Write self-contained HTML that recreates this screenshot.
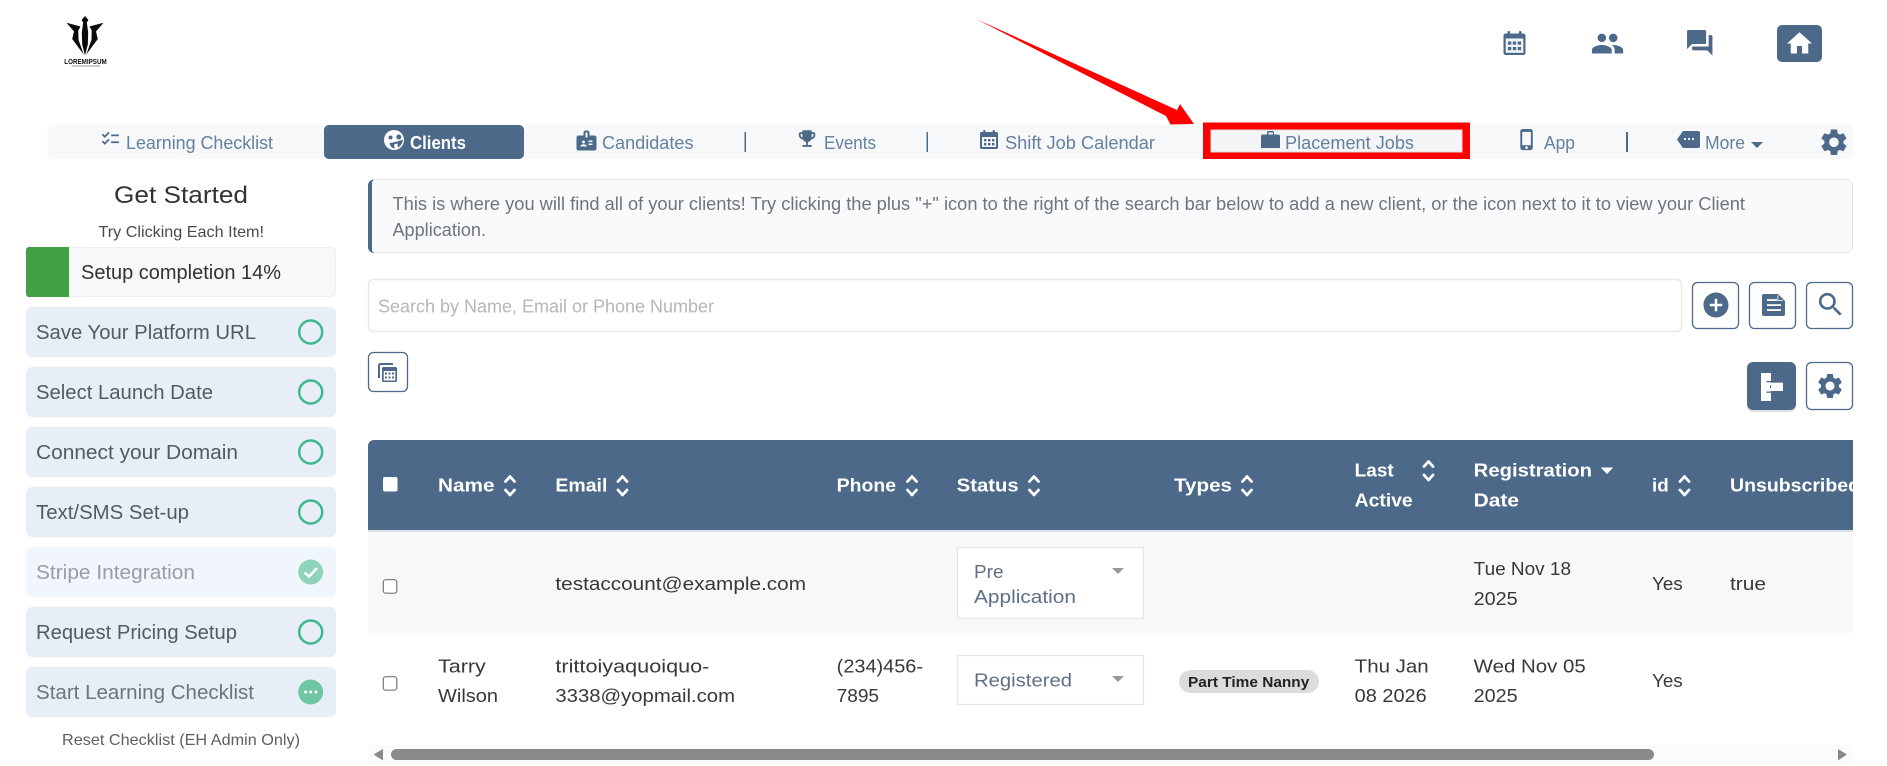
<!DOCTYPE html>
<html lang="en"><head><meta charset="utf-8"><title>Clients</title>
<style>
html,body{margin:0;padding:0;background:#fff;width:1887px;height:766px;overflow:hidden}
svg{display:block}
text{font-family:"Liberation Sans",sans-serif;font-size:18px;white-space:pre}
.nav{fill:#66809e;font-size:18px}
.side{fill:#555a60;font-size:20px}
.hd{fill:#fff;font-weight:700;font-size:18.5px}
.td{fill:#383838;font-size:18.5px}
.sel{fill:#5f7085;font-size:18.5px}
.ic{fill:#4c698a}
</style></head><body>
<svg width="1887" height="766" viewBox="0 0 1887 766" xmlns="http://www.w3.org/2000/svg">
<defs>
<path id="gear" d="M19.14 12.94c.04-.3.06-.61.06-.94 0-.32-.02-.64-.07-.94l2.03-1.58c.18-.14.23-.41.12-.61l-1.92-3.32c-.12-.22-.37-.29-.59-.22l-2.39.96c-.5-.38-1.03-.7-1.62-.94l-.36-2.54c-.04-.24-.24-.41-.48-.41h-3.84c-.24 0-.43.17-.47.41l-.36 2.54c-.59.24-1.13.57-1.62.94l-2.39-.96c-.22-.08-.47 0-.59.22L2.74 8.87c-.12.21-.08.47.12.61l2.03 1.58c-.05.3-.09.63-.09.94s.02.64.07.94l-2.03 1.58c-.18.14-.23.41-.12.61l1.92 3.32c.12.22.37.29.59.22l2.39-.96c.5.38 1.03.7 1.62.94l.36 2.54c.05.24.24.41.48.41h3.84c.24 0 .44-.17.47-.41l.36-2.54c.59-.24 1.13-.56 1.62-.94l2.39.96c.22.08.47 0 .59-.22l1.92-3.32c.12-.22.07-.47-.12-.61l-2.01-1.58zM12 15.6c-1.98 0-3.6-1.62-3.6-3.6s1.62-3.6 3.6-3.6 3.6 1.62 3.6 3.6-1.62 3.6-3.6 3.6z"/>
<g id="sort" fill="none" stroke="#fff" stroke-width="2.8" stroke-linecap="round" stroke-linejoin="round"><path d="M1.5 7.5 6 2.5l4.5 5M1.5 16 6 21l4.5-5"/></g>
<g id="cal"><rect x="0" y="2.5" width="22" height="21.5" rx="2.2"/><rect x="4" y="0" width="2.6" height="5" rx="1"/><rect x="15.4" y="0" width="2.6" height="5" rx="1"/></g>
<clipPath id="tbl"><path d="M368 446a6 6 0 0 1 6-6H1853V766H368z"/></clipPath>
</defs>

<!-- logo -->
<g fill="#0a0a0a">
<path d="M85 16l3.4 4-1.6 2.5 1.4 10-.4 12L85 55.500l-2.800-11-.4-12 1.400-10L81.600 20z"/>
<path d="M66.500 22.700 80.500 26.500l-2.200 3.700.2 9.500 5.200 14.800-11.500-15.500 1.800-7.500z"/>
<path d="M103.500 22.700 89.500 26.500l2.200 3.700-.2 9.500-5.200 14.800 11.500-15.500-1.800-7.500z"/>
</g>
<text x="64.300" y="64" textLength="42.400" lengthAdjust="spacingAndGlyphs" style="font-size:7px;font-weight:700;fill:#111">LOREMIPSUM</text>
<rect x="71.500" y="65.500" width="28.500" height="1" fill="#999"/>

<!-- top icons -->
<g transform="translate(1503.500,31)" class="ic"><use href="#cal"/></g>
<rect x="1505.700" y="38.500" width="17.600" height="14.300" fill="#f2f5f8"/>
<g class="ic" transform="translate(1503.500,31)"><rect x="4.400" y="10.500" width="3.400" height="3.200"/><rect x="9.300" y="10.500" width="3.400" height="3.200"/><rect x="14.200" y="10.500" width="3.400" height="3.200"/><rect x="4.400" y="16" width="3.400" height="3.200"/><rect x="9.300" y="16" width="3.400" height="3.200"/><rect x="14.200" y="16" width="3.400" height="3.200"/></g>
<g class="ic" transform="translate(1590.500,26.500) scale(1.42)"><path d="M16 11c1.660 0 2.990-1.340 2.990-3S17.660 5 16 5c-1.660 0-3 1.340-3 3s1.340 3 3 3zm-8 0c1.660 0 2.990-1.340 2.990-3S9.660 5 8 5C6.340 5 5 6.340 5 8s1.340 3 3 3zm0 2c-2.330 0-7 1.170-7 3.500V19h14v-2.500c0-2.330-4.670-3.500-7-3.500zm8 0c-.29 0-.62.020-.97.050 1.160.84 1.970 1.970 1.970 3.450V19h6v-2.500c0-2.330-4.670-3.500-7-3.500z"/></g>
<g class="ic" transform="translate(1684.500,27.500) scale(1.27)"><path d="M21 6h-2v9H6v2c0 .55.45 1 1 1h11l4 4V7c0-.55-.45-1-1-1zm-4 6V3c0-.55-.45-1-1-1H3c-.55 0-1 .45-1 1v14l4-4h10c.55 0 1-.45 1-1z"/></g>
<rect x="1777" y="25" width="45" height="37" rx="5" fill="#4c698a"/>
<g fill="#fff" transform="translate(1784.500,28.500) scale(1.25)"><path d="M10 20v-6h4v6h5v-8h3L12 3 2 12h3v8z"/></g>

<!-- nav -->
<rect x="47.500" y="125" width="1805.500" height="34" rx="5" fill="#f6f8fa"/>
<rect x="324" y="125" width="200" height="34" rx="5" fill="#4c698a"/>

<g class="ic" transform="translate(100,128.500) scale(.86)"><path d="M22 7h-9v2h9V7zm0 8h-9v2h9v-2zM5.540 11L2 7.460l1.410-1.410 2.120 2.120 4.240-4.240 1.410 1.410L5.540 11zm0 8L2 15.460l1.410-1.410 2.120 2.120 4.240-4.240 1.410 1.410L5.540 19z"/></g>
<text class="nav" x="126" y="149" textLength="147" lengthAdjust="spacingAndGlyphs">Learning Checklist</text>

<circle cx="394" cy="140" r="10" fill="#fff"/>
<g fill="#4c698a"><circle cx="390.500" cy="137.500" r="2"/><circle cx="398.800" cy="137" r="2.500"/><path d="M389.500 143c3.500-.4 9-1.600 13.500-3.500-.4 4.500-3.500 8.500-8 9-3 0-5-2.500-5.500-5.500z"/></g>
<path d="M394 144.500l3.500-1 .3 4.500-3 .8z" fill="#fff"/>
<text x="410" y="149" textLength="56" lengthAdjust="spacingAndGlyphs" style="fill:#fff;font-weight:700;font-size:18px">Clients</text>

<g class="ic" transform="translate(574.500,128.500)"><path d="M20 7h-5V4c0-1.100-.9-2-2-2h-2c-1.100 0-2 .9-2 2v3H4c-1.100 0-2 .9-2 2v11c0 1.100.9 2 2 2h16c1.100 0 2-.9 2-2V9c0-1.100-.9-2-2-2zM9 12c.83 0 1.500.67 1.500 1.500S9.830 15 9 15s-1.500-.67-1.500-1.500S8.170 12 9 12zm3 6H6v-.75c0-1 2-1.500 3-1.500s3 .5 3 1.500V18zm1-9h-2V4h2v5zm5 7.500h-4V15h4v1.500zm0-3h-4V12h4v1.500z"/></g>
<text class="nav" x="602" y="149" textLength="91.500" lengthAdjust="spacingAndGlyphs">Candidates</text>
<rect x="744.500" y="132" width="1.500" height="20" fill="#4c698a"/>

<g class="ic" transform="translate(796,127.500) scale(.92)"><path d="M19 5h-2V3H7v2H5c-1.100 0-2 .9-2 2v1c0 2.550 1.920 4.630 4.390 4.940.63 1.500 1.980 2.630 3.610 2.960V19H7v2h10v-2h-4v-3.100c1.630-.33 2.980-1.460 3.610-2.960C19.080 12.630 21 10.550 21 8V7c0-1.100-.9-2-2-2zM5 8V7h2v3.820C5.840 10.400 5 9.300 5 8zm14 0c0 1.300-.84 2.400-2 2.820V7h2v1z"/></g>
<text class="nav" x="824" y="149" textLength="52" lengthAdjust="spacingAndGlyphs">Events</text>
<rect x="926.500" y="132" width="1.500" height="20" fill="#4c698a"/>

<g class="ic" transform="translate(980,130) scale(.82,.79)"><use href="#cal"/></g>
<rect x="982" y="137" width="14" height="10" fill="#f6f8fa"/>
<g fill="#4c698a"><rect x="984" y="139" width="2.400" height="2.400"/><rect x="988" y="139" width="2.400" height="2.400"/><rect x="992" y="139" width="2.400" height="2.400"/><rect x="984" y="143" width="2.400" height="2.400"/><rect x="988" y="143" width="2.400" height="2.400"/><rect x="992" y="143" width="2.400" height="2.400"/></g>
<text class="nav" x="1005" y="149" textLength="150" lengthAdjust="spacingAndGlyphs">Shift Job Calendar</text>

<rect x="1203" y="122.500" width="267" height="36.500" fill="#ff0000"/>
<rect x="1211" y="130" width="251" height="22" fill="#f3f5f7" stroke="#e2dcdc" stroke-width="1"/>
<path class="ic" d="M1261 136.500a2 2 0 0 1 2-2h4v-2a1.500 1.500 0 0 1 1.500-1.500h4a1.500 1.500 0 0 1 1.500 1.500v2h4a2 2 0 0 1 2 2v11.500h-19zM1268.500 132.500v2h4.500v-2z"/>
<text class="nav" x="1285" y="149" textLength="129" lengthAdjust="spacingAndGlyphs">Placement Jobs</text>

<g class="ic" transform="translate(1515.500,128) scale(.96)"><path d="M15.500 1h-8C6.120 1 5 2.120 5 3.500v17C5 21.880 6.120 23 7.500 23h8c1.380 0 2.500-1.120 2.500-2.500v-17C18 2.120 16.880 1 15.500 1zm-4 21c-.83 0-1.500-.67-1.500-1.500s.67-1.500 1.500-1.500 1.500.67 1.500 1.500-.67 1.500-1.500 1.500zm4.500-4H7V4h9v14z"/></g>
<text class="nav" x="1544" y="149" textLength="31" lengthAdjust="spacingAndGlyphs">App</text>
<rect x="1626" y="132" width="2" height="20" fill="#4c698a"/>

<path class="ic" d="M1683 131h15a2 2 0 0 1 2 2v13a2 2 0 0 1-2 2h-15l-6-8.500z"/>
<g fill="#fff"><circle cx="1685" cy="139" r="1.100"/><circle cx="1689" cy="139" r="1.100"/><circle cx="1693" cy="139" r="1.100"/></g>
<text class="nav" x="1705" y="149" textLength="40" lengthAdjust="spacingAndGlyphs">More</text>
<path class="ic" d="M1751 142h12l-6 6z"/>
<g class="ic" transform="translate(1818,126.300) scale(1.33)"><use href="#gear"/></g>

<!-- arrow -->
<path d="M976 19 1177 110 1180 104 1194 124 1170.500 124.500 1166 116z" fill="#ff0000"/>

<!-- sidebar -->
<text x="114" y="203" textLength="134" lengthAdjust="spacingAndGlyphs" style="font-size:24px;fill:#333">Get Started</text>
<text x="98.500" y="237" textLength="165.500" lengthAdjust="spacingAndGlyphs" style="font-size:16px;fill:#4a4a4a">Try Clicking Each Item!</text>
<rect x="26.500" y="247.500" width="309" height="49" rx="4" fill="#f7f8fa" stroke="#eeeff1"/>
<path d="M29 247h40v50H29a3 3 0 0 1-3-3V250a3 3 0 0 1 3-3z" fill="#43a047"/>
<text x="81" y="279" textLength="200" lengthAdjust="spacingAndGlyphs" style="font-size:20px;fill:#333">Setup completion 14%</text>

<g fill="#e8eef8">
<rect x="26" y="307" width="310" height="50" rx="6"/>
<rect x="26" y="367" width="310" height="50" rx="6"/>
<rect x="26" y="427" width="310" height="50" rx="6"/>
<rect x="26" y="487" width="310" height="50" rx="6"/>
<rect x="26" y="547" width="310" height="50" rx="6" fill="#f1f5fc"/>
<rect x="26" y="607" width="310" height="50" rx="6"/>
<rect x="26" y="667" width="310" height="50" rx="6"/>
</g>
<text class="side" x="36" y="339" textLength="220" lengthAdjust="spacingAndGlyphs">Save Your Platform URL</text>
<text class="side" x="36" y="399" textLength="177" lengthAdjust="spacingAndGlyphs">Select Launch Date</text>
<text class="side" x="36" y="459" textLength="202" lengthAdjust="spacingAndGlyphs">Connect your Domain</text>
<text class="side" x="36" y="519" textLength="153" lengthAdjust="spacingAndGlyphs">Text/SMS Set-up</text>
<text class="side" x="36" y="579" textLength="159" lengthAdjust="spacingAndGlyphs" style="fill:#9a9ea2">Stripe Integration</text>
<text class="side" x="36" y="639" textLength="201" lengthAdjust="spacingAndGlyphs">Request Pricing Setup</text>
<text class="side" x="36" y="699" textLength="218" lengthAdjust="spacingAndGlyphs" style="fill:#6e747a">Start Learning Checklist</text>
<g fill="none" stroke="#3cb88a" stroke-width="2.400">
<circle cx="310.700" cy="332" r="11.500"/><circle cx="310.700" cy="392" r="11.500"/><circle cx="310.700" cy="452" r="11.500"/><circle cx="310.700" cy="512" r="11.500"/><circle cx="310.700" cy="632" r="11.500"/>
</g>
<circle cx="310.700" cy="572" r="12.500" fill="#8fd4b8"/>
<path d="M304.500 572.500l4.500 4 8-8.500" fill="none" stroke="#fff" stroke-width="2.500"/>
<circle cx="310.700" cy="692" r="12.500" fill="#6fc6a3"/>
<g fill="#fff"><circle cx="305.500" cy="692" r="1.500"/><circle cx="310.700" cy="692" r="1.500"/><circle cx="315.900" cy="692" r="1.500"/></g>
<text x="62" y="745" textLength="238" lengthAdjust="spacingAndGlyphs" style="font-size:16px;fill:#5c6064">Reset Checklist (EH Admin Only)</text>

<!-- info box -->
<rect x="368.500" y="179.500" width="1484" height="73" rx="6" fill="#f9fafc" stroke="#e4e6ea"/>
<path d="M374 179.500a6 6 0 0 0-6 6v61.500a6 6 0 0 0 6 6 5 5 0 0 1-2-5v-64a5 5 0 0 1 2-4.500z" fill="#4c698a"/>
<text x="392.500" y="210" textLength="1352.500" lengthAdjust="spacingAndGlyphs" style="fill:#6e757d">This is where you will find all of your clients! Try clicking the plus "+" icon to the right of the search bar below to add a new client, or the icon next to it to view your Client</text>
<text x="392.500" y="236" textLength="93.500" lengthAdjust="spacingAndGlyphs" style="fill:#6e757d">Application.</text>

<!-- search -->
<rect x="368.500" y="279.500" width="1313" height="52" rx="5" fill="#fff" stroke="#e9e9e9" stroke-width="1.500"/>
<text x="378" y="312.700" textLength="336" lengthAdjust="spacingAndGlyphs" style="fill:#b4b7ba">Search by Name, Email or Phone Number</text>
<g fill="#fff" stroke="#4c698a" stroke-width="1.300">
<rect x="1692.500" y="282.500" width="46" height="46" rx="5"/>
<rect x="1749.500" y="282.500" width="46" height="46" rx="5"/>
<rect x="1806.500" y="282.500" width="46" height="46" rx="5"/>
<rect x="368.500" y="352.500" width="39" height="39" rx="5"/>
<rect x="1806.500" y="362.500" width="46" height="47" rx="5"/>
</g>
<g class="ic" transform="translate(1701,290) scale(1.25)"><path d="M12 2C6.480 2 2 6.480 2 12s4.480 10 10 10 10-4.480 10-10S17.520 2 12 2zm5 11h-4v4h-2v-4H7v-2h4V7h2v4h4v2z"/></g>
<!-- doc icon -->
<path class="ic" d="M1764 294h14l7 7v13a2 2 0 0 1-2 2h-19a2 2 0 0 1-2-2v-18a2 2 0 0 1 2-2z"/>
<g fill="#fff"><rect x="1767" y="299.200" width="10" height="1.800"/><rect x="1767" y="304.200" width="14" height="1.800"/><rect x="1767" y="309.200" width="14" height="1.800"/><path d="M1777.500 295.500v5.500h6l-.8-.8h-4.400v-5.500z"/></g>
<g class="ic" transform="translate(1815,289) scale(1.3)"><path d="M15.500 14h-.79l-.28-.27C15.410 12.590 16 11.110 16 9.500 16 5.910 13.090 3 9.500 3S3 5.910 3 9.500 5.910 16 9.500 16c1.610 0 3.090-.59 4.230-1.570l.27.28v.79l5 4.990L20.490 19l-4.990-5zm-6 0C7.010 14 5 11.990 5 9.500S7.010 5 9.500 5 14 7.010 14 9.500 11.990 14 9.500 14z"/></g>
<!-- calc copy icon -->
<g class="ic"><path d="M378 365.500a2.500 2.500 0 0 1 2.500-2.500H393v2h-12.500a.5.500 0 0 0-.5.5V378h-2z"/><rect x="382" y="367" width="15" height="15" rx="1.500"/></g>
<rect x="383.700" y="371" width="11.600" height="9.500" fill="#fff"/>
<g fill="#4c698a"><rect x="385" y="372.500" width="2" height="2"/><rect x="388.500" y="372.500" width="2" height="2"/><rect x="392" y="372.500" width="2" height="2"/><rect x="385" y="376.500" width="2" height="2"/><rect x="388.500" y="376.500" width="2" height="2"/><rect x="392" y="376.500" width="2" height="2"/></g>
<!-- tree + gear -->
<rect x="1747" y="363" width="49" height="49" rx="6" fill="#000" opacity=".12"/>
<rect x="1747" y="362" width="49" height="48" rx="6" fill="#4c698a"/>
<g fill="#fff"><rect x="1761" y="373" width="10" height="28"/><rect x="1771" y="382.700" width="12" height="8.300"/></g>
<g fill="#4c698a"><rect x="1766.500" y="381" width="4.500" height="1.300"/><rect x="1766.500" y="391.500" width="4.500" height="1.300"/><rect x="1770" y="385.500" width="1.200" height="2.500"/></g>
<g class="ic" transform="translate(1815,371) scale(1.25)"><use href="#gear"/></g>

<!-- table -->
<g clip-path="url(#tbl)">
<rect x="368" y="440" width="1485" height="90" fill="#4c698a"/>
<rect x="368" y="530" width="1485" height="2" fill="#dee2e6"/>
<rect x="368" y="532" width="1485" height="101" fill="#f7f8fa"/>
<rect x="368" y="745" width="1485" height="18" fill="#fbfbfb"/>
<rect x="383" y="477" width="14.500" height="14.500" rx="2" fill="#fff"/>
<text class="hd" x="438" y="491.700" textLength="56.500" lengthAdjust="spacingAndGlyphs">Name</text>
<use href="#sort" x="504" y="474"/>
<text class="hd" x="555.400" y="491.700" textLength="52" lengthAdjust="spacingAndGlyphs">Email</text>
<use href="#sort" x="616.500" y="474"/>
<text class="hd" x="836.700" y="491.700" textLength="59.300" lengthAdjust="spacingAndGlyphs">Phone</text>
<use href="#sort" x="906" y="474"/>
<text class="hd" x="956.700" y="491.700" textLength="62" lengthAdjust="spacingAndGlyphs">Status</text>
<use href="#sort" x="1028" y="474"/>
<text class="hd" x="1174" y="491.700" textLength="58" lengthAdjust="spacingAndGlyphs">Types</text>
<use href="#sort" x="1241" y="474"/>
<text class="hd" x="1354.700" y="476.700" textLength="39" lengthAdjust="spacingAndGlyphs">Last</text>
<text class="hd" x="1354.700" y="506.700" textLength="58" lengthAdjust="spacingAndGlyphs">Active</text>
<use href="#sort" x="1422.500" y="459"/>
<text class="hd" x="1473.700" y="476.700" textLength="118.300" lengthAdjust="spacingAndGlyphs">Registration</text>
<text class="hd" x="1473.700" y="506.700" textLength="45.300" lengthAdjust="spacingAndGlyphs">Date</text>
<path d="M1600.700 467.500h12.600l-6.300 6.500z" fill="#fff"/>
<text class="hd" x="1652" y="491.700" textLength="16.700" lengthAdjust="spacingAndGlyphs">id</text>
<use href="#sort" x="1678.500" y="474"/>
<text class="hd" x="1730" y="491.700" textLength="130" lengthAdjust="spacingAndGlyphs">Unsubscribed</text>

<!-- row 1 -->
<rect x="383.300" y="579.700" width="13.500" height="13.500" rx="2.500" fill="#fff" stroke="#767676" stroke-width="1.200"/>
<text class="td" x="555.400" y="590" textLength="250.600" lengthAdjust="spacingAndGlyphs">testaccount@example.com</text>
<rect x="957.500" y="547.500" width="186" height="71" fill="#fff" stroke="#e6e6e6" stroke-width="1.300"/>
<text class="sel" x="974" y="578" textLength="29.500" lengthAdjust="spacingAndGlyphs">Pre</text>
<text class="sel" x="974" y="603" textLength="102" lengthAdjust="spacingAndGlyphs">Application</text>
<path d="M1112 568h12l-6 6z" fill="#999"/>
<text class="td" x="1473.700" y="575" textLength="97.300" lengthAdjust="spacingAndGlyphs">Tue Nov 18</text>
<text class="td" x="1473.700" y="605" textLength="44" lengthAdjust="spacingAndGlyphs">2025</text>
<text class="td" x="1652" y="590" textLength="30.700" lengthAdjust="spacingAndGlyphs">Yes</text>
<text class="td" x="1730" y="590" textLength="36" lengthAdjust="spacingAndGlyphs">true</text>

<!-- row 2 -->
<rect x="383.300" y="676.700" width="13.500" height="13.500" rx="2.500" fill="#fff" stroke="#767676" stroke-width="1.200"/>
<text class="td" x="438" y="672.300" textLength="47.800" lengthAdjust="spacingAndGlyphs">Tarry</text>
<text class="td" x="438" y="702" textLength="60" lengthAdjust="spacingAndGlyphs">Wilson</text>
<text class="td" x="555.400" y="672.300" textLength="154" lengthAdjust="spacingAndGlyphs">trittoiyaquoiquo-</text>
<text class="td" x="555.400" y="702" textLength="179.600" lengthAdjust="spacingAndGlyphs">3338@yopmail.com</text>
<text class="td" x="836.700" y="672.300" textLength="86.300" lengthAdjust="spacingAndGlyphs">(234)456-</text>
<text class="td" x="836.700" y="702" textLength="42.300" lengthAdjust="spacingAndGlyphs">7895</text>
<rect x="957.500" y="655.500" width="186" height="49" fill="#fff" stroke="#e6e6e6" stroke-width="1.300"/>
<text class="sel" x="974" y="686.700" textLength="98" lengthAdjust="spacingAndGlyphs">Registered</text>
<path d="M1112 676h12l-6 6z" fill="#999"/>
<rect x="1179" y="670" width="140" height="23" rx="11.500" fill="#dcdcdc"/>
<text x="1188" y="687" textLength="121.300" lengthAdjust="spacingAndGlyphs" style="font-size:14.500px;font-weight:700;fill:#222">Part Time Nanny</text>
<text class="td" x="1354.700" y="672.300" textLength="74" lengthAdjust="spacingAndGlyphs">Thu Jan</text>
<text class="td" x="1354.700" y="702" textLength="72" lengthAdjust="spacingAndGlyphs">08 2026</text>
<text class="td" x="1473.700" y="672.300" textLength="112" lengthAdjust="spacingAndGlyphs">Wed Nov 05</text>
<text class="td" x="1473.700" y="702" textLength="44" lengthAdjust="spacingAndGlyphs">2025</text>
<text class="td" x="1652" y="687" textLength="30.700" lengthAdjust="spacingAndGlyphs">Yes</text>

<!-- scrollbar -->
<rect x="391" y="749" width="1263" height="11" rx="5.500" fill="#8a8a8a"/>
<path d="M373.500 754.500 383 749v11.500z" fill="#8a8a8a"/>
<path d="M1847 754.500 1838 749v11.500z" fill="#8a8a8a"/>
</g>
</svg>
</body></html>
